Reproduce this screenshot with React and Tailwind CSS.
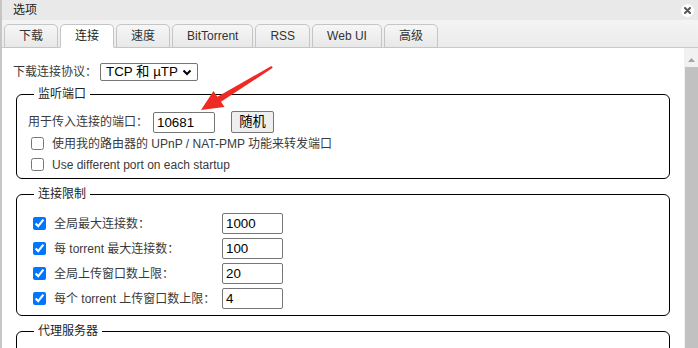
const tabs = ['下载', '连接', '速度', 'BitTorrent', 'RSS', 'Web UI', '高级'];

const limits = [
  { label: '全局最大连接数：', value: '1000' },
  { label: '每 torrent 最大连接数：', value: '100' },
  { label: '全局上传窗口数上限：', value: '20' },
  { label: '每个 torrent 上传窗口数上限：', value: '4' },
];

const Group = ({ title, className = '', children }) => (
  <fieldset className={`ml-[3px] mr-[14px] rounded-[6px] border border-black pl-[11px] ${className}`}>
    <legend className="ml-[6px] px-[4px] text-[12px] leading-[14px] text-[#222]">{title}</legend>
    {children}
  </fieldset>
);

const TextBox = ({ value, className = '' }) => (
  <input
    defaultValue={value}
    className={`h-[21px] rounded-[2px] border border-[#767676] bg-white px-[3px] text-[13.33px] leading-[17px] text-black outline-none ${className}`}
  />
);

export default function App() {
  return (
    <div
      className="relative flex h-[348px] w-[698px] flex-col overflow-hidden border-l-2 border-[#c6c6c6] bg-white text-[#3a3a3a]"
      style={{ fontFamily: '"Liberation Sans", "Noto Sans CJK SC", sans-serif' }}
    >
      {/* title bar */}
      <div className="flex h-[20px] shrink-0 items-center justify-between bg-[#e9e9e9] pl-[11px] pr-[4px]">
        <span className="text-[12px] leading-[14px] text-[#222]">选项</span>
        <span className="flex h-[13px] w-[13px] items-center justify-center rounded-full bg-white">
          <svg width="7" height="7" viewBox="0 0 7 7">
            <path d="M1 1L6 6M6 1L1 6" stroke="#555" strokeWidth="2" strokeLinecap="round" />
          </svg>
        </span>
      </div>

      {/* tabs */}
      <div className="flex h-[28px] shrink-0 items-end gap-[2px] border-b border-[#c9c9c9] bg-gradient-to-b from-[#f4f4f4] to-[#ebebeb] pl-[2px]">
        {tabs.map((t) => {
          const active = t === '连接';
          return (
            <div
              key={t}
              className={`-mb-px flex h-[24px] items-center rounded-t-[5px] border border-[#c5c5c5] px-[14px] text-[12px] leading-[14px] ${
                active
                  ? 'border-b-white bg-white text-[#222]'
                  : 'bg-gradient-to-b from-[#f6f6f6] to-[#e8e8e8] text-[#333]'
              }`}
            >
              {t}
            </div>
          );
        })}
      </div>

      <div className="flex min-h-0 flex-1">
        {/* scrolling content */}
        <div className="min-w-0 flex-1 pl-[11px] pt-[15px]">
          <div className="flex h-[18px] items-center">
            <span className="w-[87px] text-[12px] leading-[14px]">下载连接协议：</span>
            <span className="flex h-[18px] w-[98px] items-center justify-between rounded-[2px] border border-[#767676] pl-[5px] pr-[5px] text-[13.33px] leading-[16px] text-black">
              TCP 和 µTP
              <svg width="10" height="7" viewBox="0 0 10 7">
                <path d="M1.5 1.5L5 5L8.5 1.5" fill="none" stroke="#000" strokeWidth="2" />
              </svg>
            </span>
          </div>

          <Group title="监听端口" className="mt-[6px] pb-[3px]">
            <div className="mt-[10px] flex h-[22px] items-center">
              <span className="w-[125px] text-[12px] leading-[14px]">用于传入连接的端口：</span>
              <TextBox value="10681" className="w-[62px]" />
              <button className="ml-[16px] h-[22px] w-[43px] rounded-[2px] border border-[#767676] bg-[#efefef] text-[13.33px] leading-[16px] text-black">
                随机
              </button>
            </div>
            <label className="flex h-[21px] items-center pl-[3px]">
              <input type="checkbox" className="h-[13px] w-[13px]" />
              <span className="ml-[8px] text-[12px] leading-[14px]">使用我的路由器的 UPnP / NAT-PMP 功能来转发端口</span>
            </label>
            <label className="flex h-[21px] items-center pl-[3px]">
              <input type="checkbox" className="h-[13px] w-[13px]" />
              <span className="ml-[8px] text-[12px] leading-[14px]">Use different port on each startup</span>
            </label>
          </Group>

          <Group title="连接限制" className="mt-[8px] pb-[4px]">
            <div className="pt-[10px]">
              {limits.map((row) => (
                <div key={row.label} className="flex h-[25px] items-center">
                  <input type="checkbox" defaultChecked className="ml-[5px] h-[13px] w-[13px]" />
                  <span className="ml-[8px] w-[168px] text-[12px] leading-[14px]">{row.label}</span>
                  <TextBox value={row.value} className="w-[61px]" />
                </div>
              ))}
            </div>
          </Group>

          <Group title="代理服务器" className="mt-[8px] h-[60px]" />
        </div>

        {/* scrollbar */}
        <div className="flex w-[14px] shrink-0 flex-col bg-[#f1f1f1] pl-[1px]">
          <div className="flex h-[19px] items-end justify-center pb-[5px]">
            <svg width="7" height="4" viewBox="0 0 7 4">
              <path d="M0 4L3.5 0L7 4Z" fill="#a3a3a3" />
            </svg>
          </div>
          <div className="flex-1 bg-[#c1c1c1]" />
        </div>
      </div>

      {/* annotation arrow */}
      <svg className="pointer-events-none absolute left-0 top-0" width="698" height="348" viewBox="0 0 698 348">
        <polygon
          points="199,110 222.5,107 219,101.8 270.8,67.8 269.4,66 215.4,96.8 211.5,91"
          fill="#ee2a24"
        />
      </svg>
    </div>
  );
}
